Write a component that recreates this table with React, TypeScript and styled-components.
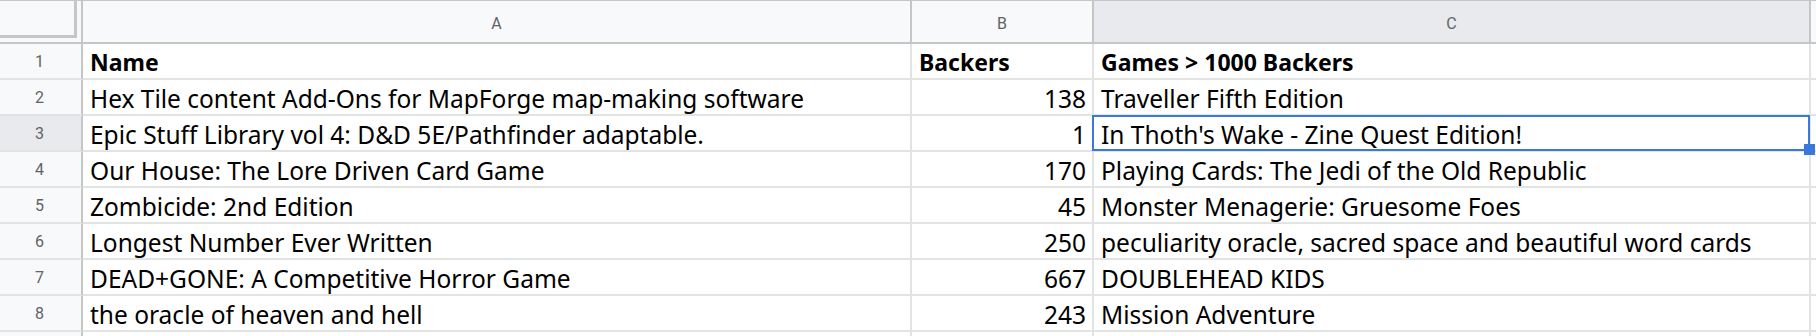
import React from 'react';
import styled, { createGlobalStyle, css } from 'styled-components';

const GlobalStyle = createGlobalStyle`
  html, body {
    margin: 0;
    padding: 0;
    background: #ffffff;
    overflow: hidden;
  }
`;

const HEADER_LINE = '#c4c7c5';
const GRID_LINE = '#e2e3e3';
const SELECT_BLUE = '#3b78dc';

const Sheet = styled.div`
  display: grid;
  grid-template-columns: 83px 829px 182px 717px 1fr;
  grid-template-rows: 43px;
  grid-auto-rows: 36px;
  width: 1816px;
  height: 336px;
  overflow: hidden;
  border-top: 1px solid ${HEADER_LINE};
  box-sizing: border-box;
`;

const Corner = styled.div`
  background: #f8f9fa;
  border-right: 2px solid ${HEADER_LINE};
  border-bottom: 2px solid ${HEADER_LINE};
  box-sizing: border-box;
  display: flex;
`;

const FreezeBar = styled.div`
  width: 77px;
  height: 37px;
  box-sizing: border-box;
  border-right: 3px solid ${HEADER_LINE};
  border-bottom: 3px solid ${HEADER_LINE};
`;

const ColHeader = styled.div<{ $active?: boolean }>`
  background: ${(p) => (p.$active ? '#e8eaed' : '#f8f9fa')};
  border-right: 2px solid ${HEADER_LINE};
  border-bottom: 2px solid ${HEADER_LINE};
  box-sizing: border-box;
  display: flex;
  align-items: center;
  justify-content: center;
  font-family: Roboto, 'Liberation Sans', sans-serif;
  font-size: 16px;
  color: #5f6368;
  padding-top: 3px;
`;

const RowHeader = styled.div<{ $active?: boolean }>`
  background: ${(p) => (p.$active ? '#e8eaed' : '#f8f9fa')};
  border-right: 2px solid ${HEADER_LINE};
  border-bottom: 2px solid ${GRID_LINE};
  box-sizing: border-box;
  display: flex;
  align-items: center;
  justify-content: center;
  font-family: Roboto, 'Liberation Sans', sans-serif;
  font-size: 16px;
  color: #5f6368;
  padding-right: 2px;
`;

const Cell = styled.div<{ $bold?: boolean; $numeric?: boolean; $selected?: boolean }>`
  position: relative;
  border-right: 2px solid ${GRID_LINE};
  border-bottom: 2px solid ${GRID_LINE};
  box-sizing: border-box;
  display: flex;
  align-items: flex-end;
  justify-content: ${(p) => (p.$numeric ? 'flex-end' : 'flex-start')};
  padding: 0 6px 0 7px;
  font-family: 'Noto Sans', 'Open Sans', sans-serif;
  font-size: ${(p) => (p.$bold ? '23px' : '24.5px')};
  line-height: 31px;
  font-weight: ${(p) => (p.$bold ? 700 : 400)};
  color: #000000;
  white-space: nowrap;
  overflow: visible;
  ${(p) =>
    p.$selected &&
    css`
      &::after {
        content: '';
        position: absolute;
        left: -2px;
        top: -1px;
        right: -1px;
        bottom: -1px;
        border: 2px solid ${SELECT_BLUE};
        pointer-events: none;
      }
    `}
`;

const FillHandle = styled.span`
  position: absolute;
  right: -6px;
  bottom: -5px;
  width: 11px;
  height: 11px;
  background: ${SELECT_BLUE};
  z-index: 2;
`;

const rows: Array<[string, string, string]> = [
  ['Name', 'Backers', 'Games > 1000 Backers'],
  ['Hex Tile content Add-Ons for MapForge map-making software', '138', 'Traveller Fifth Edition'],
  ['Epic Stuff Library vol 4: D&D 5E/Pathfinder adaptable.', '1', "In Thoth's Wake - Zine Quest Edition!"],
  ['Our House: The Lore Driven Card Game', '170', 'Playing Cards: The Jedi of the Old Republic'],
  ['Zombicide: 2nd Edition', '45', 'Monster Menagerie: Gruesome Foes'],
  ['Longest Number Ever Written', '250', 'peculiarity oracle, sacred space and beautiful word cards'],
  ['DEAD+GONE: A Competitive Horror Game', '667', 'DOUBLEHEAD KIDS'],
  ['the oracle of heaven and hell', '243', 'Mission Adventure'],
];

const SELECTED_ROW = 3;

const App: React.FunctionComponent = () => {
  return (
    <>
      <GlobalStyle />
      <Sheet>
        <Corner>
          <FreezeBar />
        </Corner>
        <ColHeader>A</ColHeader>
        <ColHeader>B</ColHeader>
        <ColHeader $active>C</ColHeader>
        <ColHeader />
        {rows.map((row, index) => {
          const rowNumber = index + 1;
          const isHeader = rowNumber === 1;
          const isSelected = rowNumber === SELECTED_ROW;
          return (
            <React.Fragment key={rowNumber}>
              <RowHeader $active={isSelected}>{rowNumber}</RowHeader>
              <Cell $bold={isHeader}>{row[0]}</Cell>
              <Cell $bold={isHeader} $numeric={!isHeader}>
                {row[1]}
              </Cell>
              <Cell $bold={isHeader} $selected={isSelected}>
                {row[2]}
                {isSelected && <FillHandle />}
              </Cell>
              <Cell />
            </React.Fragment>
          );
        })}
        {/* partly visible row 9 at the bottom edge */}
        <RowHeader />
        <Cell />
        <Cell />
        <Cell />
        <Cell />
      </Sheet>
    </>
  );
};

export default App;
